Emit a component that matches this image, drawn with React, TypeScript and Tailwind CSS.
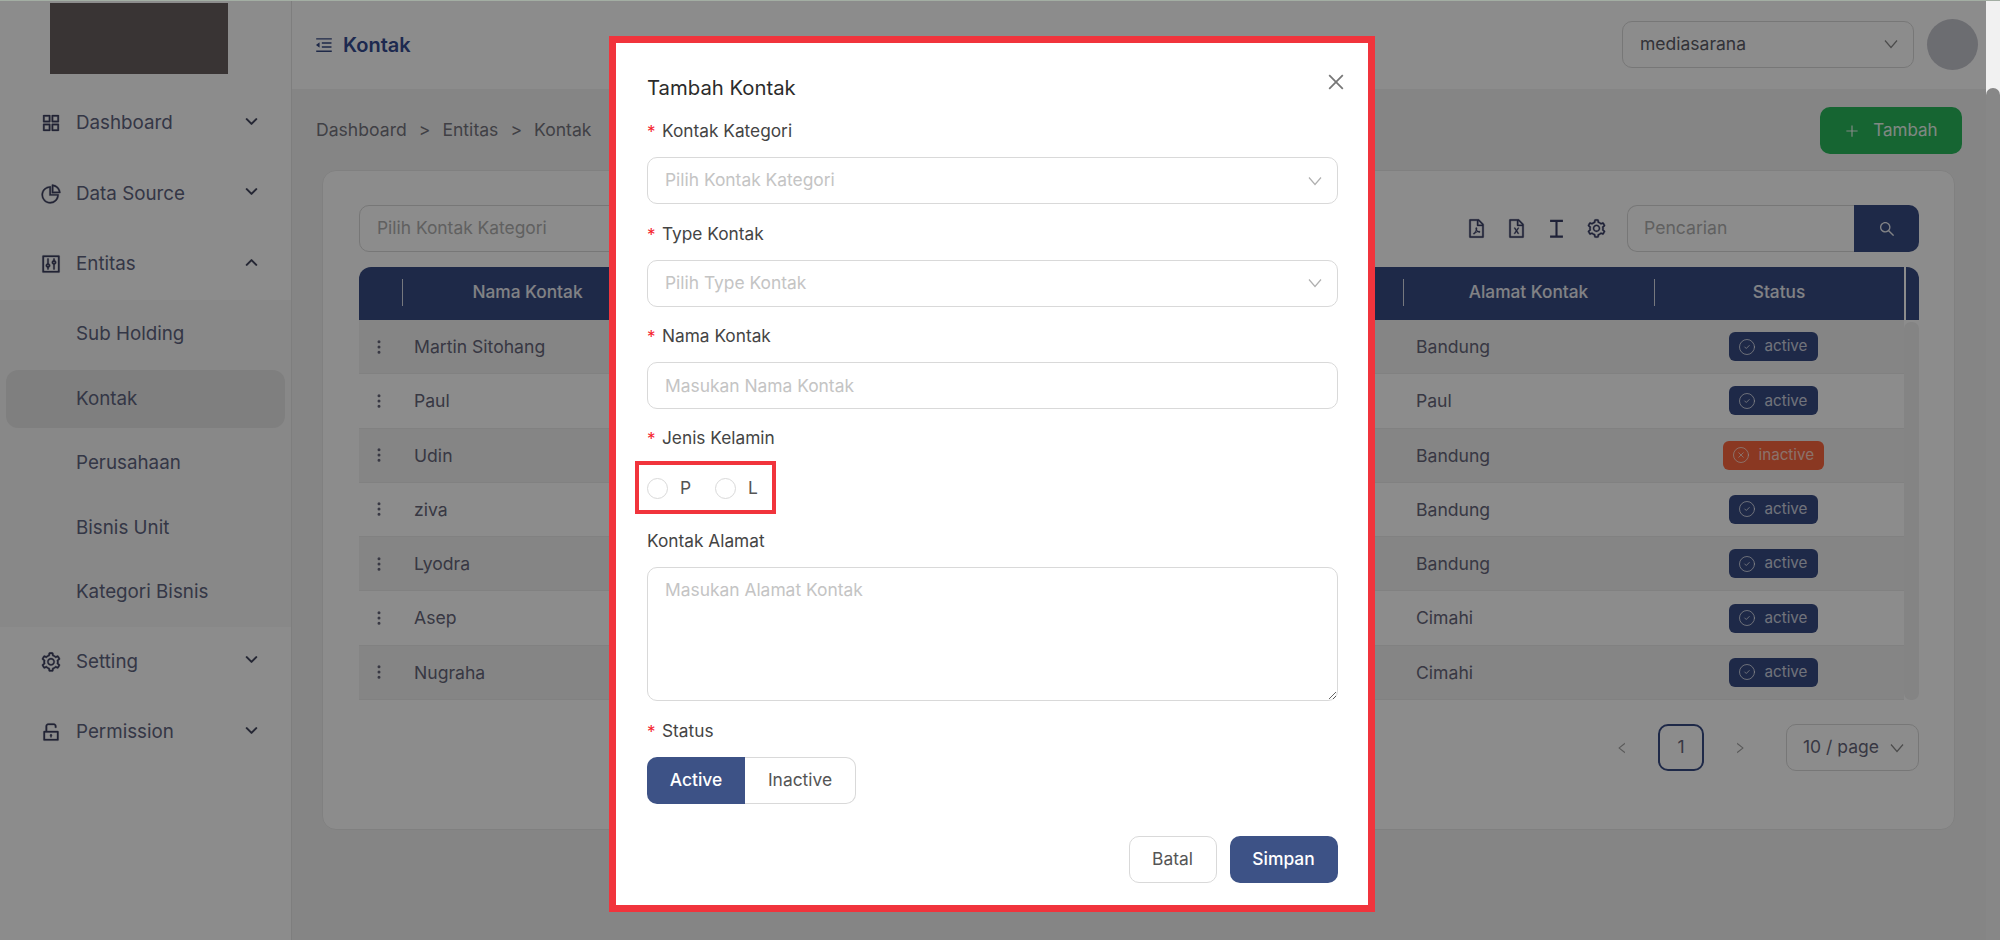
import { ChevronDown, ChevronUp, CircleCheck, CircleX, EllipsisVertical } from "lucide-react";
import {
  AiOutlineAppstore,
  AiOutlineClose,
  AiOutlineControl,
  AiOutlineFileExcel,
  AiOutlineFilePdf,
  AiOutlineLeft,
  AiOutlineMenuFold,
  AiOutlinePieChart,
  AiOutlinePlus,
  AiOutlineRight,
  AiOutlineSearch,
  AiOutlineSetting,
  AiOutlineUnlock,
} from "react-icons/ai";

const rows = [
  { name: "Martin Sitohang", addr: "Bandung", active: true },
  { name: "Paul", addr: "Paul", active: true },
  { name: "Udin", addr: "Bandung", active: false },
  { name: "ziva", addr: "Bandung", active: true },
  { name: "Lyodra", addr: "Bandung", active: true },
  { name: "Asep", addr: "Cimahi", active: true },
  { name: "Nugraha", addr: "Cimahi", active: true },
];

const subMenu = ["Sub Holding", "Kontak", "Perusahaan", "Bisnis Unit", "Kategori Bisnis"];

export default function App() {
  return (
    <div className="flex h-[940px] w-[2000px] flex-col overflow-hidden bg-white font-['Inter',sans-serif]">
      <div className="h-px w-full shrink-0 bg-[#a3aea3]" />
      <div className="flex min-h-0 flex-1">
        <div className="relative flex w-[1986px] shrink-0">
          <Sidebar />
          <div className="flex min-w-0 flex-1 flex-col bg-[#f3f3f3]">
            <Topbar />
            <Content />
          </div>
          {/* modal mask */}
          <div className="absolute inset-0 bg-black/45" />
          <Modal />
        </div>
        {/* page scrollbar */}
        <div className="flex w-[14px] shrink-0 flex-col bg-[#f1f1f1]">
          <div className="mt-[87px] flex-1 rounded-t-[7px] bg-[#878787]" />
        </div>
      </div>
    </div>
  );
}

// the thin select arrow, steeper than the lucide one
function Arrow({ className }: { className?: string }) {
  return (
    <svg width="14" height="10" viewBox="0 0 14 10" fill="none" stroke="currentColor" strokeWidth="1.2" className={className}>
      <path d="M1 1.5 7 8.5 13 1.5" />
    </svg>
  );
}

function Sidebar() {
  return (
    <div className="w-[292px] shrink-0 border-r border-[#e6e6e6] bg-white text-[18.8px] text-[#5f6480]">
      <div className="h-[87px] pl-[50px] pt-[2px]">
        <div className="h-[71px] w-[178px] bg-[#68605f]" />
      </div>
      <MenuRow icon={<AiOutlineAppstore size={22} />} label="Dashboard" />
      <MenuRow icon={<AiOutlinePieChart size={22} />} label="Data Source" />
      <MenuRow icon={<AiOutlineControl size={22} />} label="Entitas" open />
      <div className="flex h-[327px] flex-col gap-[6.5px] bg-[#f8f8f8] px-[6px] pt-[6px]">
        {subMenu.map((s) => (
          <div
            key={s}
            className={`flex h-[58px] shrink-0 items-center rounded-[12px] pl-[70px] ${s === "Kontak" ? "bg-[#e8e8e8]" : ""}`}
          >
            {s}
          </div>
        ))}
      </div>
      <MenuRow icon={<AiOutlineSetting size={22} />} label="Setting" />
      <MenuRow icon={<AiOutlineUnlock size={22} />} label="Permission" />
    </div>
  );
}

function MenuRow({ icon, label, open }: { icon: any; label: string; open?: boolean }) {
  return (
    <div className="flex h-[70.5px] items-center pl-[40px] pr-[30px]">
      <span className="w-[36px] text-[#3d4060] [&_path]:stroke-current [&_path]:[stroke-width:16px]">{icon}</span>
      <span className="flex-1">{label}</span>
      {open ? (
        <ChevronUp size={19} strokeWidth={2.6} className="-mt-[4px] text-[#44475f]" />
      ) : (
        <ChevronDown size={19} strokeWidth={2.6} className="-mt-[4px] text-[#44475f]" />
      )}
    </div>
  );
}

function Topbar() {
  return (
    <div className="flex h-[88px] shrink-0 items-center bg-white pl-[22px] pr-[8px]">
      <AiOutlineMenuFold size={20} className="text-[#384b84]" />
      <div className="ml-[9px] flex-1 text-[20px] font-semibold text-[#354c91]">Kontak</div>
      <div className="-mt-[2px] flex h-[47px] w-[292px] items-center justify-between rounded-[10px] border border-[#d9d9d9] pl-[17px] pr-[15px] text-[17.5px] text-[#5c5c66]">
        mediasarana
        <Arrow className="text-[#8a8a8a]" />
      </div>
      <div className="-mt-[2px] ml-[13px] h-[51px] w-[51px] rounded-full bg-[#c5c6ce]" />
    </div>
  );
}

function Content() {
  return (
    <div className="px-6">
      <div className="mt-[18px] flex h-[47px] items-center justify-between">
        <div className="flex gap-[12px] text-[17.6px] text-[#75757f]">
          <span>Dashboard</span>
          <span>&gt;</span>
          <span>Entitas</span>
          <span>&gt;</span>
          <span>Kontak</span>
        </div>
        <div className="flex h-[47px] w-[142px] items-center justify-center gap-[13px] rounded-[10px] bg-[#28b85c] text-[17px] text-white/90">
          <AiOutlinePlus size={16} />
          Tambah
        </div>
      </div>
      <div className="ml-[6px] mr-[7px] mt-[16px] h-[660px] rounded-[14px] border border-[#eaeaea] bg-white pl-[36px] pr-[35px] pt-[34px]">
        <div className="flex h-[47px] items-center">
          <div className="flex h-[47px] w-[300px] items-center rounded-[10px] border border-[#d9d9d9] pl-[17px] text-[17.4px] text-[#b0b0b0]">
            Pilih Kontak Kategori
          </div>
          <div className="ml-auto flex items-center gap-[19px] text-[#3a3f66]">
            <span className="[&_path]:stroke-current [&_path]:[stroke-width:16px]">
              <AiOutlineFilePdf size={21} />
            </span>
            <span className="[&_path]:stroke-current [&_path]:[stroke-width:16px]">
              <AiOutlineFileExcel size={21} />
            </span>
            <svg width="21" height="21" viewBox="0 0 18 18" fill="none" stroke="currentColor" strokeWidth="1.8">
              <path d="M3.5 2.5h11M3.5 16h11M9 2.5V16" />
            </svg>
            <span className="[&_path]:stroke-current [&_path]:[stroke-width:16px]">
              <AiOutlineSetting size={21} />
            </span>
          </div>
          <div className="ml-[20px] flex h-[47px] w-[292px]">
            <div className="flex flex-1 items-center rounded-l-[10px] border border-r-0 border-[#d9d9d9] pl-[16px] text-[17.6px] text-[#b0b0b0]">
              Pencarian
            </div>
            <div className="flex w-[65px] items-center justify-center rounded-r-[10px] bg-[#384b84] text-white/90">
              <AiOutlineSearch size={18} />
            </div>
          </div>
        </div>

        <div className="mt-[15px] grid h-[53px] grid-cols-[43px_251px_1fr_251px_250px_15px] items-center overflow-hidden rounded-t-[12px] bg-[#384b84] text-[17.3px] font-medium text-white/90">
          <div />
          <HeadCell label="Nama Kontak" />
          <div />
          <HeadCell label="Alamat Kontak" />
          <HeadCell label="Status" />
          <div className="h-[53px] border-l-2 border-white" />
        </div>

        <div className="flex h-[380px]">
          <div className="flex flex-1 flex-col">
            {rows.map((r, i) => (
              <div
                key={r.name}
                className={`grid flex-1 grid-cols-[43px_251px_1fr_251px_250px] items-center border-b border-[#ececec] text-[17.6px] text-[#66667a] ${i % 2 === 0 ? "bg-[#f3f3f3]" : "bg-white"}`}
              >
                <EllipsisVertical size={18} className="ml-[11px]" />
                <div className="pl-[12px] pt-[1px]">{r.name}</div>
                <div />
                <div className="pl-[13px] pt-[1px]">{r.addr}</div>
                <div className="flex justify-center pr-[12px]">
                  <Badge active={r.active} />
                </div>
              </div>
            ))}
          </div>
          <div className="w-[15px] pt-[2px]">
            <div className="h-full rounded-[7px] bg-[#f0f0f0]" />
          </div>
        </div>

        <div className="mt-[24px] flex items-center justify-end text-[17.5px] text-[#66667a]">
          <AiOutlineLeft size={14} className="text-[#a3a3a3]" />
          <div className="ml-[29px] flex h-[47px] w-[46px] items-center justify-center rounded-[10px] border-2 border-[#384b84]">
            1
          </div>
          <AiOutlineRight size={14} className="ml-[29px] text-[#a3a3a3]" />
          <div className="ml-[39px] flex h-[47px] w-[133px] items-center justify-between rounded-[10px] border border-[#d9d9d9] pl-[16px] pr-[14px]">
            10 / page
            <Arrow className="text-[#8a8a8a]" />
          </div>
        </div>
      </div>
    </div>
  );
}

function HeadCell({ label }: { label: string }) {
  return (
    <div className="relative flex h-full items-center justify-center pb-[3px]">
      <span className="absolute left-0 top-[12px] h-[27px] w-px bg-white/80" />
      {label}
    </div>
  );
}

function Badge({ active }: { active: boolean }) {
  return active ? (
    <div className="flex h-[29px] w-[89px] items-center rounded-[6px] bg-[#384b84] pl-[9px] text-[15.2px] text-white/75">
      <CircleCheck size={18} strokeWidth={1.25} />
      <span className="ml-[9px]">active</span>
    </div>
  ) : (
    <div className="flex h-[29px] w-[101px] items-center rounded-[6px] bg-[#fb663e] pl-[9px] text-[15.2px] text-white/70">
      <CircleX size={18} strokeWidth={1.25} />
      <span className="ml-[9px]">inactive</span>
    </div>
  );
}

function Modal() {
  return (
    <div className="absolute left-[609px] top-[35px] h-[876px] w-[766px] border-[7.5px] border-[#f1343c] bg-white pl-[31px] pr-[30.5px] pt-[31px] text-[#333]">
      <div className="flex h-[28px] items-center text-[20.3px] text-[#2b2b2b]">Tambah Kontak</div>
      <AiOutlineClose size={22} className="absolute right-[21px] top-[28px] text-[#777]" />

      <div className="mt-[16px]">
        <Label required text="Kontak Kategori" />
        <FakeSelect placeholder="Pilih Kontak Kategori" />
        <Label required text="Type Kontak" />
        <FakeSelect placeholder="Pilih Type Kontak" />
        <Label required text="Nama Kontak" />
        <input
          placeholder="Masukan Nama Kontak"
          className="mb-[16px] block h-[47px] w-full rounded-[10px] border border-[#d9d9d9] pl-[17px] text-[17.4px] outline-none placeholder:text-[#c4c4c4]"
        />
        <Label required text="Jenis Kelamin" />
        <div className="relative mb-[14px] h-[50px]">
          <div className="flex h-full items-center pb-[2px] text-[17.4px] text-[#555]">
            <span className="h-[21px] w-[21px] rounded-full border border-[#d9d9d9]" />
            <span className="ml-[12px]">P</span>
            <span className="ml-[24px] h-[21px] w-[21px] rounded-full border border-[#d9d9d9]" />
            <span className="ml-[12px]">L</span>
          </div>
          <div className="absolute left-[-12px] top-[-3px] h-[53px] w-[141px] border-4 border-[#f1343c]" />
        </div>
        <Label text="Kontak Alamat" />
        <textarea
          placeholder="Masukan Alamat Kontak"
          className="mb-[17px] block h-[134px] w-full rounded-[10px] border border-[#d9d9d9] px-[17px] py-[9px] text-[17.4px] outline-none placeholder:text-[#c4c4c4]"
        />
        <Label required text="Status" />
        <div className="flex h-[47px] w-[209px] text-[17.4px]">
          <div className="flex w-[98px] items-center justify-center rounded-l-[10px] bg-[#3d5286] font-medium text-white">
            Active
          </div>
          <div className="flex flex-1 items-center justify-center rounded-r-[10px] border border-l-0 border-[#d9d9d9] text-[#555]">
            Inactive
          </div>
        </div>
      </div>

      <div className="mt-[32px] flex justify-end gap-[13px] text-[17.4px]">
        <div className="flex h-[47px] w-[88px] items-center justify-center rounded-[10px] border border-[#d9d9d9] text-[#555]">
          Batal
        </div>
        <div className="flex h-[47px] w-[108px] items-center justify-center rounded-[10px] bg-[#3d5286] font-medium text-white">
          Simpan
        </div>
      </div>
    </div>
  );
}

function Label({ text, required }: { text: string; required?: boolean }) {
  return (
    <div className="mb-[13px] flex h-[26px] items-center text-[17.3px] text-[#444]">
      {required && <span className="w-[15px] pt-[4px] text-[17px] text-[#f5222d]">*</span>}
      {text}
    </div>
  );
}

function FakeSelect({ placeholder }: { placeholder: string }) {
  return (
    <div className="mb-[16.5px] flex h-[47px] items-center justify-between rounded-[10px] border border-[#d9d9d9] pl-[17px] pr-[15px] text-[17.4px] text-[#c4c4c4]">
      {placeholder}
      <Arrow className="text-[#b0b0b0]" />
    </div>
  );
}
